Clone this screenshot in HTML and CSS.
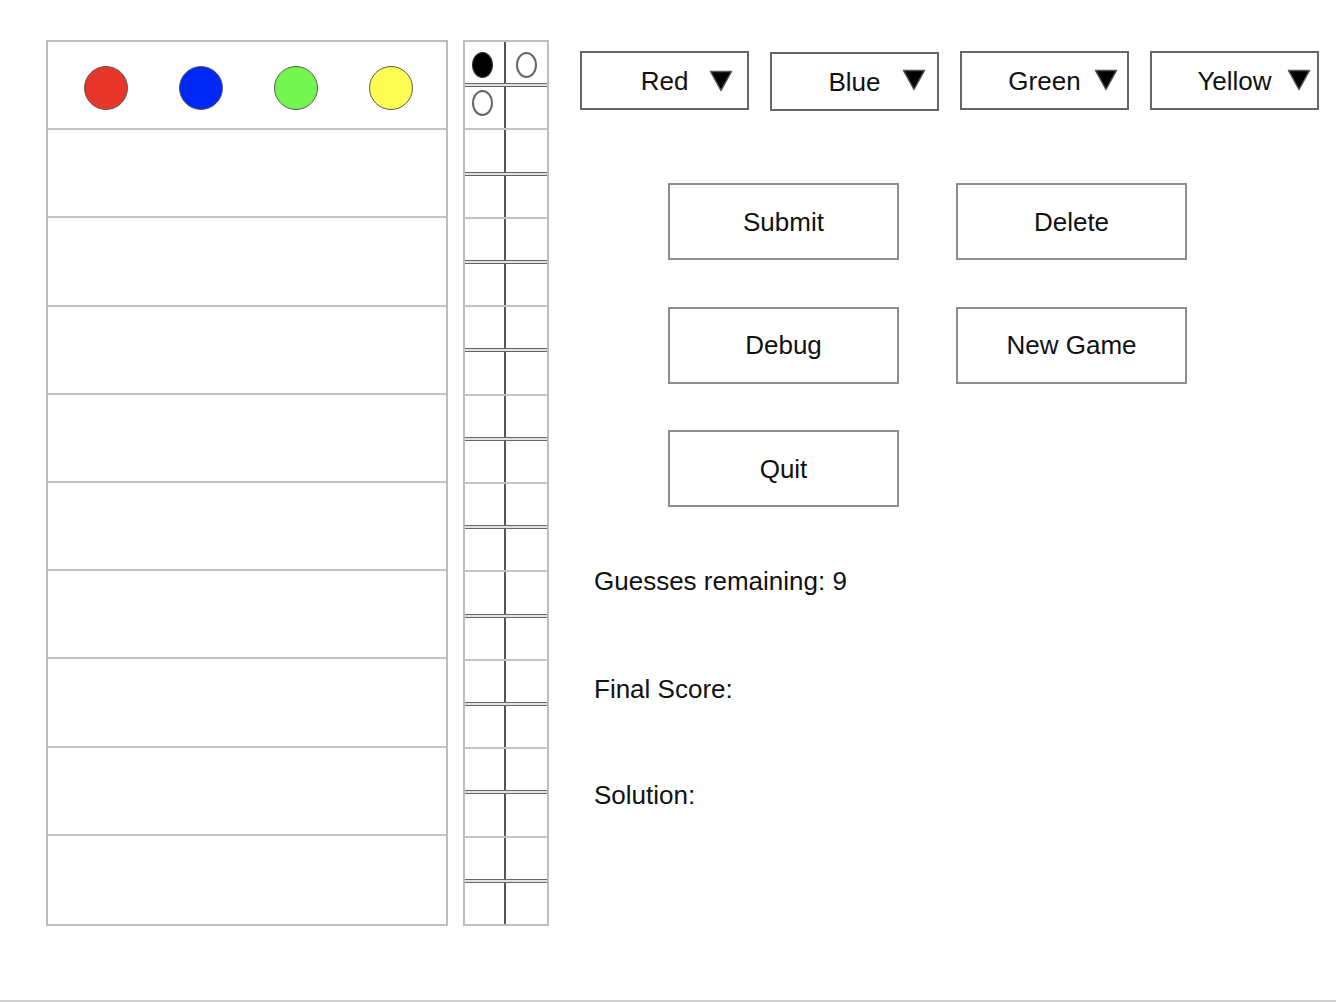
FILE: index.html
```html
<!DOCTYPE html>
<html>
<head>
<meta charset="utf-8">
<title>Mastermind</title>
<link rel="stylesheet" href="styles.css">
</head>
<body>
<div class="page">
  <div class="board">
    <div class="row guess-row">
      <span class="peg red"></span>
      <span class="peg blue"></span>
      <span class="peg green"></span>
      <span class="peg yellow"></span>
    </div>
    <div class="row"></div>
    <div class="row"></div>
    <div class="row"></div>
    <div class="row"></div>
    <div class="row"></div>
    <div class="row"></div>
    <div class="row"></div>
    <div class="row"></div>
    <div class="row"></div>
  </div>

  <div class="feedback">
    <div class="block">
      <div class="cells top">
        <div class="cell"><span class="key black"></span></div>
        <div class="cell"><span class="key white"></span></div>
      </div>
      <div class="dbl"></div>
      <div class="cells bottom">
        <div class="cell"><span class="key white"></span></div>
        <div class="cell"></div>
      </div>
    </div>
    <div class="block"><div class="cells"><div class="cell"></div><div class="cell"></div></div><div class="dbl"></div><div class="cells"><div class="cell"></div><div class="cell"></div></div></div>
    <div class="block"><div class="cells"><div class="cell"></div><div class="cell"></div></div><div class="dbl"></div><div class="cells"><div class="cell"></div><div class="cell"></div></div></div>
    <div class="block"><div class="cells"><div class="cell"></div><div class="cell"></div></div><div class="dbl"></div><div class="cells"><div class="cell"></div><div class="cell"></div></div></div>
    <div class="block"><div class="cells"><div class="cell"></div><div class="cell"></div></div><div class="dbl"></div><div class="cells"><div class="cell"></div><div class="cell"></div></div></div>
    <div class="block"><div class="cells"><div class="cell"></div><div class="cell"></div></div><div class="dbl"></div><div class="cells"><div class="cell"></div><div class="cell"></div></div></div>
    <div class="block"><div class="cells"><div class="cell"></div><div class="cell"></div></div><div class="dbl"></div><div class="cells"><div class="cell"></div><div class="cell"></div></div></div>
    <div class="block"><div class="cells"><div class="cell"></div><div class="cell"></div></div><div class="dbl"></div><div class="cells"><div class="cell"></div><div class="cell"></div></div></div>
    <div class="block"><div class="cells"><div class="cell"></div><div class="cell"></div></div><div class="dbl"></div><div class="cells"><div class="cell"></div><div class="cell"></div></div></div>
    <div class="block"><div class="cells"><div class="cell"></div><div class="cell"></div></div><div class="dbl"></div><div class="cells"><div class="cell"></div><div class="cell"></div></div></div>
  </div>

  <div class="panel">
    <div class="selects">
      <div class="select s-red"><span class="label">Red</span><svg class="arrow" width="24" height="22" viewBox="0 0 24 22"><polygon points="1.5,1.5 22.5,1.5 12,20.5" fill="#000" stroke="#555" stroke-width="1.5" stroke-linejoin="round"/></svg></div>
      <div class="select s-blue"><span class="label">Blue</span><svg class="arrow" width="24" height="22" viewBox="0 0 24 22"><polygon points="1.5,1.5 22.5,1.5 12,20.5" fill="#000" stroke="#555" stroke-width="1.5" stroke-linejoin="round"/></svg></div>
      <div class="select s-green"><span class="label">Green</span><svg class="arrow" width="24" height="22" viewBox="0 0 24 22"><polygon points="1.5,1.5 22.5,1.5 12,20.5" fill="#000" stroke="#555" stroke-width="1.5" stroke-linejoin="round"/></svg></div>
      <div class="select s-yellow"><span class="label">Yellow</span><svg class="arrow" width="24" height="22" viewBox="0 0 24 22"><polygon points="1.5,1.5 22.5,1.5 12,20.5" fill="#000" stroke="#555" stroke-width="1.5" stroke-linejoin="round"/></svg></div>
    </div>

    <div class="buttons">
      <div class="btn">Submit</div>
      <div class="btn">Delete</div>
      <div class="btn">Debug</div>
      <div class="btn">New Game</div>
      <div class="btn">Quit</div>
    </div>

    <div class="info">
      <p class="line first">Guesses remaining: 9</p>
      <p class="line second">Final Score:</p>
      <p class="line third">Solution:</p>
    </div>
  </div>
</div>
</body>
</html>
```

FILE: styles.css
```css
html, body {
  margin: 0;
  padding: 0;
  background: #fff;
  overflow: hidden;
}

body {
  font-family: "Liberation Sans", Arial, sans-serif;
  color: #111;
}

.page {
  box-sizing: border-box;
  height: 1002px;
  border-bottom: 2px solid #cfcfcf;
  display: flex;
  align-items: flex-start;
  padding: 40px 0 0 46px;
}

/* ---------- board ---------- */
.board {
  box-sizing: border-box;
  width: 402px;
  height: 886px;
  border: 2px solid #bdbdbd;
  display: grid;
  grid-template-rows: repeat(10, 1fr);
}

.row {
  border-bottom: 2px solid #c4c4c4;
}

.row:last-child {
  border-bottom: none;
}

.guess-row {
  display: flex;
  align-items: flex-start;
  padding: 24px 0 0 36px;
  gap: 51px;
}

.peg {
  box-sizing: border-box;
  width: 44px;
  height: 44px;
  border-radius: 50%;
  border: 1.5px solid #5a5a5a;
}

.peg.red { background: #e8352a; }
.peg.blue { background: #0028f5; }
.peg.green { background: #72f54c; }
.peg.yellow { background: #fcfc52; }

/* ---------- feedback ---------- */
.feedback {
  box-sizing: border-box;
  width: 86px;
  height: 886px;
  margin-left: 15px;
  border: 2px solid #bdbdbd;
  display: flex;
  flex-direction: column;
}

.block {
  flex: 1;
  display: grid;
  grid-template-rows: 1fr 4px 1fr;
  border-bottom: 2px solid #c4c4c4;
}

.block:last-child {
  border-bottom: none;
}

.cells {
  display: grid;
  grid-template-columns: 41px 1fr;
}

.cell {
  display: flex;
  justify-content: center;
  align-items: center;
}

.cell:first-child {
  border-right: 2px solid #555;
}

.cells.top .cell {
  padding-top: 5px;
}

.cells.top .cell:first-child {
  padding-right: 5px;
}

.cells.bottom .cell {
  padding-bottom: 9px;
}

.cells.bottom .cell:first-child {
  padding-right: 5px;
}

.dbl {
  box-sizing: border-box;
  border-top: 1px solid #666;
  border-bottom: 1px solid #666;
  background: #e2e2e2;
}

.key {
  box-sizing: border-box;
  width: 21px;
  height: 26px;
  border-radius: 50%;
}

.key.black {
  background: #000;
  border: 1px solid #333;
}

.key.white {
  background: #fff;
  border: 2.5px solid #666;
}

/* ---------- right panel ---------- */
.panel {
  margin-left: 31px;
  display: flex;
  flex-direction: column;
}

.selects {
  display: flex;
  gap: 21px;
  margin-top: 11px;
}

.select {
  position: relative;
  box-sizing: border-box;
  width: 169px;
  height: 59px;
  border: 2px solid #666;
  display: flex;
  align-items: center;
  justify-content: center;
  font-size: 26px;
}

.label {
  margin-top: 1px;
}

.s-blue {
  margin-top: 1px;
}

.arrow {
  position: absolute;
  top: 17px;
  display: block;
}

.s-red .arrow { right: 14px; }
.s-blue .arrow { right: 11px; top: 15px; }
.s-green .arrow { right: 9px; top: 16px; }
.s-yellow .arrow { right: 6px; top: 16px; }

.buttons {
  display: grid;
  grid-template-columns: 231px 231px;
  column-gap: 57px;
  row-gap: 46.5px;
  margin: 72px 0 0 88px;
}

.btn {
  box-sizing: border-box;
  height: 77px;
  border: 2px solid #8d8d8d;
  display: flex;
  align-items: center;
  justify-content: center;
  font-size: 26px;
  padding-top: 1px;
}

.info {
  padding-left: 14px;
}

.line {
  margin: 0;
  font-size: 26px;
  line-height: 30px;
}

.line.first { margin-top: 59px; }
.line.second { margin-top: 78px; }
.line.third { margin-top: 76px; }
```
